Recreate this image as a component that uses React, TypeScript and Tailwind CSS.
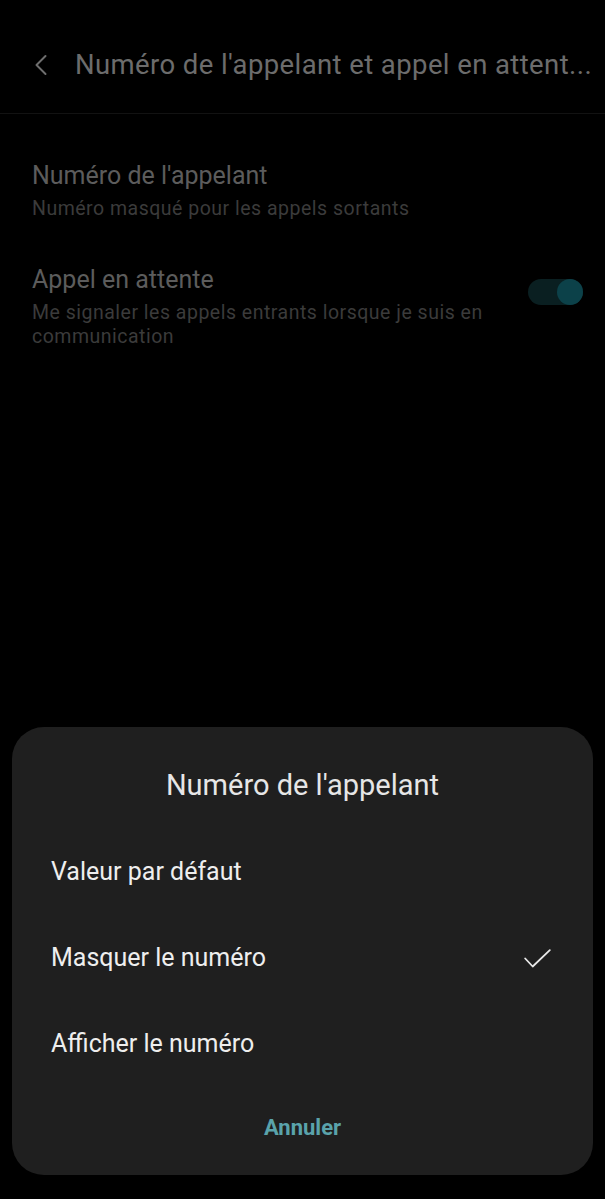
import React from "react";

export default function App() {
  return (
    <div className="min-h-screen w-full bg-black flex flex-col" style={{ fontFamily: "Roboto, 'Noto Sans', sans-serif" }}>
      <div className="h-[114px] pt-[16px] flex items-center border-b border-[#121212] shrink-0">
        <div className="w-[75px] pl-[34px] flex items-center">
          <svg width="14" height="22" viewBox="0 0 14 22" fill="none">
            <path d="M11.5 2 L2.5 11 L11.5 20" stroke="#6e6e6e" strokeWidth="2" strokeLinecap="round" strokeLinejoin="round" />
          </svg>
        </div>
        <div className="flex-1 min-w-0 pr-[8px] text-[27.5px] leading-[32px] tracking-[0.4px] text-[#6c6c6c] whitespace-nowrap overflow-hidden">
          Numéro de l'appelant et appel en attent...
        </div>
      </div>

      <div className="px-[32px] pt-[47px]">
        <div className="flex flex-col">
          <div className="text-[25px] leading-[30px] text-[#5c5c5c]">Numéro de l'appelant</div>
          <div className="text-[19.5px] leading-[24px] tracking-[0.5px] text-[#3b3b3b] mt-[6px]">Numéro masqué pour les appels sortants</div>
        </div>
        <div className="flex items-start mt-[44px]">
          <div className="flex-1 flex flex-col pr-[40px]">
            <div className="text-[25px] leading-[30px] text-[#5c5c5c]">Appel en attente</div>
            <div className="text-[19.5px] leading-[23.5px] tracking-[0.5px] text-[#3b3b3b] mt-[6px]">
              Me signaler les appels entrants lorsque je suis en communication
            </div>
          </div>
          <div className="relative w-[55px] h-[26px] mt-[14px] -mr-[10px] shrink-0">
            <div className="w-[55px] h-[26px] rounded-full bg-[#0a1f21]" />
            <div className="absolute right-0 top-0 w-[26px] h-[26px] rounded-full bg-[#0c4149]" />
          </div>
        </div>
      </div>

      <div className="mt-auto mx-[12px] mb-[24px] rounded-[32px] bg-[#1f1f1f] pt-[40px] pb-[28px] flex flex-col">
        <div className="h-[36px] flex items-center justify-center text-[29px] leading-[36px] text-[#e6e6e6]">Numéro de l'appelant</div>
        <div className="mt-[26px] flex flex-col">
          <div className="h-[86px] flex items-center px-[39px] text-[25px] text-[#eeeeee]">Valeur par défaut</div>
          <div className="h-[86px] flex items-center justify-between pl-[39px] pr-[42px] text-[25px] text-[#eeeeee]">
            <span>Masquer le numéro</span>
            <svg width="27" height="19" viewBox="0 0 27 19" fill="none">
              <path d="M1.2 9.5 L8.7 17.5 L25.8 1.2" stroke="#e8e8e8" strokeWidth="1.8" strokeLinecap="round" strokeLinejoin="round" />
            </svg>
          </div>
          <div className="h-[86px] flex items-center px-[39px] text-[25px] text-[#eeeeee]">Afficher le numéro</div>
        </div>
        <div className="mt-[20px] h-[40px] flex items-center justify-center text-[22px] font-bold text-[#5aa3ab]">Annuler</div>
      </div>
    </div>
  );
}
